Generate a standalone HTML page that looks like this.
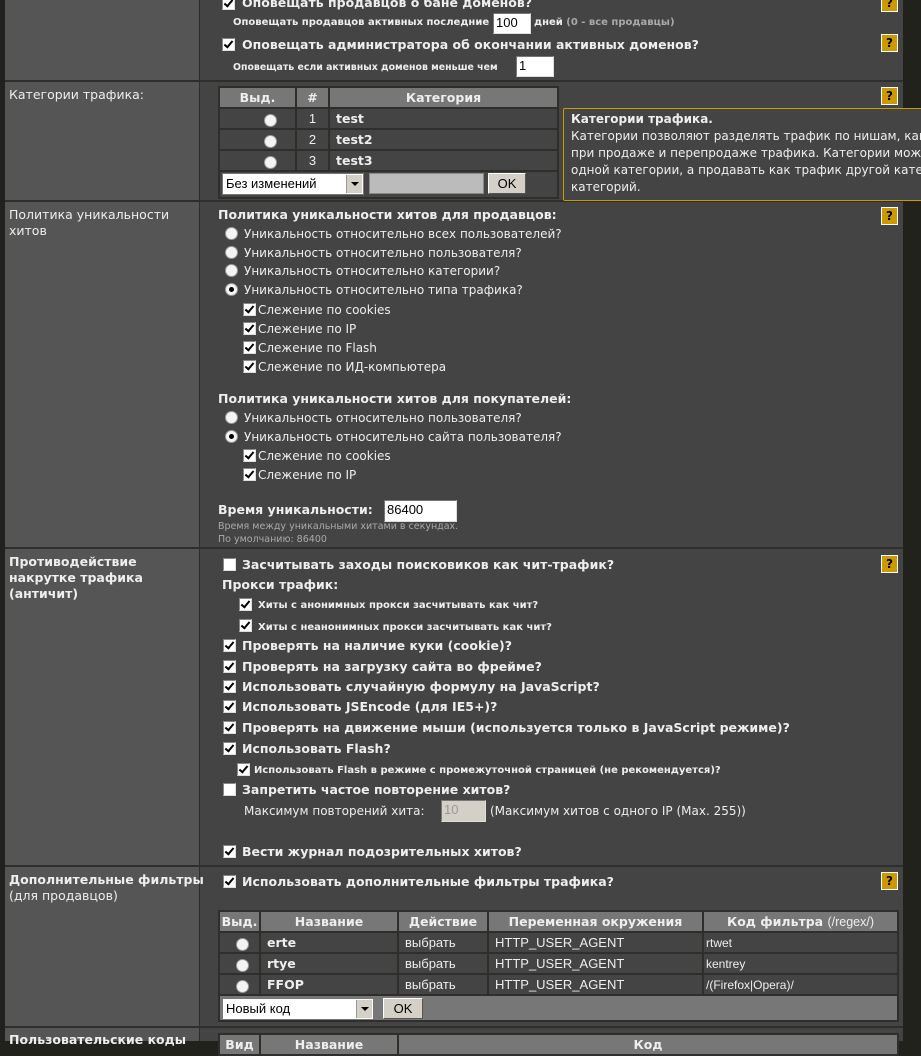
<!DOCTYPE html>
<html><head><meta charset="utf-8"><style>
body{margin:0;width:921px;height:1041px;overflow:hidden;background:#22221c;position:relative;font-family:"DejaVu Sans","Liberation Sans",sans-serif;color:#eee}
.a{position:absolute;white-space:nowrap;line-height:16px}
.b{font-weight:bold;font-size:12.5px}
.r{font-size:12px}
.s{font-weight:bold;font-size:10px}
.lc{position:absolute;left:5px;width:194px;background:#555}
.rc{position:absolute;left:200px;width:703px;background:#444}
.hl{position:absolute;left:5px;width:898px;height:2px;background:#2e2e2a}
.cb{position:absolute;width:11px;height:11px;background:#fff;border:1px solid #888;border-right-color:#ddd;border-bottom-color:#ddd}
.cb.c::after{content:"";position:absolute;left:3px;top:0px;width:3px;height:7px;border:solid #000;border-width:0 2px 2px 0;transform:rotate(40deg)}
.rd{position:absolute;width:11px;height:11px;border-radius:50%;background:#f4f4f4;border:1px solid #999}
.rd.c::after{content:"";position:absolute;left:3px;top:3px;width:5px;height:5px;border-radius:50%;background:#000}
.h{position:absolute;left:881px;width:15px;height:16px;background:#c90;border:1px solid #fff;color:#000;font:bold 12px "DejaVu Sans",sans-serif;text-align:center;line-height:16px}
.in{position:absolute;background:#fff;border:1px solid #777;border-right-color:#ddd;border-bottom-color:#ddd;color:#000;font:13px "Liberation Sans",sans-serif;line-height:18px;padding-left:2px;box-sizing:border-box}
.btn{position:absolute;background:#d4d0c8;border:1px solid #fff;border-right-color:#555;border-bottom-color:#555;color:#000;font:13px "Liberation Sans",sans-serif;text-align:center;box-sizing:border-box}
.sel{position:absolute;background:#fff;border:1px solid #777;color:#000;font:13px "Liberation Sans",sans-serif;box-sizing:border-box;padding-left:3px}
.sel i{position:absolute;right:1px;top:1px;bottom:1px;width:15px;background:#d4d0c8;border-left:1px solid #999}
.sel i::after{content:"";position:absolute;left:4px;top:7px;border:4px solid transparent;border-top:4px solid #000}
table{position:absolute;border-collapse:collapse;background:#444}
td{border:2px solid #2e2e2a;height:19px;padding:0 6px;font-size:12.5px;white-space:nowrap;box-sizing:border-box}
th{border:2px solid #2e2e2a;background:#777;height:19px;font-size:12.5px;font-weight:bold;white-space:nowrap;padding:0}
tr{height:21px}
.n{font:13px "Liberation Sans",sans-serif}
</style></head><body>
<div class="lc" style="top:0;height:1041px"></div>
<div class="rc" style="top:0;height:1041px"></div>
<div style="position:absolute;left:199px;top:0;width:1px;height:1041px;background:#2e2e2a"></div>
<div class="hl" style="top:80px"></div>
<div class="hl" style="top:200px"></div>
<div class="hl" style="top:547px"></div>
<div class="hl" style="top:865px"></div>
<div class="hl" style="top:1026px"></div>

<div class="cb c" style="left:222px;top:-3px"></div>
<div class="a b" style="left:242px;top:-5px">Оповещать продавцов о бане доменов?</div>
<div class="h" style="top:-6px">?</div>
<div class="a s" style="left:233px;top:15px">Оповещать продавцов активных последние</div>
<div class="in" style="left:493px;top:13px;width:38px;height:21px">100</div>
<div class="a s" style="left:534px;top:15px">дней <span style="color:#aaa">(0 - все продавцы)</span></div>
<div class="cb c" style="left:222px;top:38px"></div>
<div class="a b" style="left:242px;top:37px">Оповещать администратора об окончании активных доменов?</div>
<div class="h" style="top:34px">?</div>
<div class="a s" style="left:233px;top:60px;font-size:9.4px">Оповещать если активных доменов меньше чем</div>
<div class="in" style="left:516px;top:56px;width:38px;height:21px">1</div>

<div class="a" style="left:9px;top:87px;font-size:12.5px">Категории трафика:</div>
<div class="h" style="top:87px">?</div>
<table style="left:218px;top:86px;width:341px">
<tr><th style="width:75px">Выд.</th><th style="width:31px">#</th><th>Категория</th></tr>
<tr><td style="position:relative"><span class="rd" style="left:44px;top:5px"></span></td><td class="n" style="text-align:center">1</td><td><b>test</b></td></tr>
<tr><td style="position:relative"><span class="rd" style="left:44px;top:5px"></span></td><td class="n" style="text-align:center">2</td><td><b>test2</b></td></tr>
<tr><td style="position:relative"><span class="rd" style="left:44px;top:5px"></span></td><td class="n" style="text-align:center">3</td><td><b>test3</b></td></tr>
<tr style="height:27px"><td colspan="3" style="height:25px"></td></tr>
</table>
<div class="sel" style="left:222px;top:173px;width:142px;height:22px;line-height:20px">Без изменений<i></i></div>
<div style="position:absolute;left:369px;top:173px;width:115px;height:21px;background:#bbb;border:1px solid #888;box-sizing:border-box"></div>
<div class="btn" style="left:488px;top:173px;width:38px;height:21px;line-height:19px">OK</div>
<div style="position:absolute;left:563px;top:108px;width:370px;height:91px;background:#444;border:1px solid #c90;border-radius:2px"></div>
<div class="a" style="left:571px;top:111px;font-size:12px;line-height:17px">
<b>Категории трафика.</b><br>Категории позволяют разделять трафик по нишам, как<br>при продаже и перепродаже трафика. Категории можно<br>одной категории, а продавать как трафик другой катег<br>категорий.</div>

<div class="a" style="left:9px;top:207px;font-size:12.5px">Политика уникальности<br>хитов</div>
<div class="h" style="top:207px">?</div>
<div class="a b" style="left:218px;top:207px">Политика уникальности хитов для продавцов:</div>
<div class="rd" style="left:225px;top:227px"></div><div class="a r" style="left:244px;top:226px">Уникальность относительно всех пользователей?</div>
<div class="rd" style="left:225px;top:246px"></div><div class="a r" style="left:244px;top:245px">Уникальность относительно пользователя?</div>
<div class="rd" style="left:225px;top:264px"></div><div class="a r" style="left:244px;top:263px">Уникальность относительно категории?</div>
<div class="rd c" style="left:225px;top:283px"></div><div class="a r" style="left:244px;top:282px">Уникальность относительно типа трафика?</div>
<div class="cb c" style="left:243px;top:303px"></div><div class="a r" style="left:258px;top:302px">Слежение по cookies</div>
<div class="cb c" style="left:243px;top:322px"></div><div class="a r" style="left:258px;top:321px">Слежение по IP</div>
<div class="cb c" style="left:243px;top:341px"></div><div class="a r" style="left:258px;top:340px">Слежение по Flash</div>
<div class="cb c" style="left:243px;top:360px"></div><div class="a r" style="left:258px;top:359px">Слежение по ИД-компьютера</div>
<div class="a b" style="left:218px;top:391px">Политика уникальности хитов для покупателей:</div>
<div class="rd" style="left:225px;top:411px"></div><div class="a r" style="left:244px;top:410px">Уникальность относительно пользователя?</div>
<div class="rd c" style="left:225px;top:430px"></div><div class="a r" style="left:244px;top:429px">Уникальность относительно сайта пользователя?</div>
<div class="cb c" style="left:243px;top:449px"></div><div class="a r" style="left:258px;top:448px">Слежение по cookies</div>
<div class="cb c" style="left:243px;top:468px"></div><div class="a r" style="left:258px;top:467px">Слежение по IP</div>
<div class="a b" style="left:218px;top:502px">Время уникальности:</div>
<div class="in" style="left:384px;top:500px;width:73px;height:22px">86400</div>
<div class="a" style="left:218px;top:520px;font-size:9.5px;line-height:13px;color:#aaa">Время между уникальными хитами в секундах.<br>По умолчанию: 86400</div>

<div class="a" style="left:9px;top:554px;font-size:12.5px;font-weight:bold;line-height:16px">Противодействие<br>накрутке трафика<br>(античит)</div>
<div class="h" style="top:555px">?</div>
<div class="cb" style="left:223px;top:558px"></div><div class="a b" style="left:242px;top:557px">Засчитывать заходы поисковиков как чит-трафик?</div>
<div class="a b" style="left:222px;top:577px">Прокси трафик:</div>
<div class="cb c" style="left:239px;top:598px"></div><div class="a s" style="left:258px;top:598px">Хиты с анонимных прокси засчитывать как чит?</div>
<div class="cb c" style="left:239px;top:619px"></div><div class="a s" style="left:258px;top:620px">Хиты с неанонимных прокси засчитывать как чит?</div>
<div class="cb c" style="left:223px;top:639px"></div><div class="a b" style="left:242px;top:638px">Проверять на наличие куки (cookie)?</div>
<div class="cb c" style="left:223px;top:660px"></div><div class="a b" style="left:242px;top:659px">Проверять на загрузку сайта во фрейме?</div>
<div class="cb c" style="left:223px;top:680px"></div><div class="a b" style="left:242px;top:679px">Использовать случайную формулу на JavaScript?</div>
<div class="cb c" style="left:223px;top:700px"></div><div class="a b" style="left:242px;top:699px">Использовать JSEncode (для IE5+)?</div>
<div class="cb c" style="left:223px;top:721px"></div><div class="a b" style="left:242px;top:720px">Проверять на движение мыши (используется только в JavaScript режиме)?</div>
<div class="cb c" style="left:223px;top:742px"></div><div class="a b" style="left:242px;top:741px">Использовать Flash?</div>
<div class="cb c" style="left:237px;top:763px"></div><div class="a s" style="left:254px;top:763px">Использовать Flash в режиме с промежуточной страницей (не рекомендуется)?</div>
<div class="cb" style="left:223px;top:783px"></div><div class="a b" style="left:242px;top:782px">Запретить частое повторение хитов?</div>
<div class="a r" style="left:244px;top:803px">Максимум повторений хита:</div>
<div class="in" style="left:441px;top:800px;width:45px;height:22px;background:#d4d0c8;color:#999">10</div>
<div class="a r" style="left:490px;top:803px">(Максимум хитов с одного IP (Max. 255))</div>
<div class="cb c" style="left:223px;top:845px"></div><div class="a b" style="left:242px;top:844px">Вести журнал подозрительных хитов?</div>

<div class="a" style="left:9px;top:872px;font-size:12.5px"><b>Дополнительные фильтры</b><br>(для продавцов)</div>
<div class="h" style="top:872px">?</div>
<div class="cb c" style="left:223px;top:875px"></div><div class="a b" style="left:242px;top:874px">Использовать дополнительные фильтры трафика?</div>
<table style="left:218px;top:910px;width:681px">
<tr><th style="width:39px">Выд.</th><th style="width:136px">Название</th><th style="width:88px">Действие</th><th style="width:213px">Переменная окружения</th><th>Код фильтра <span style="font-weight:normal;font-family:'Liberation Sans'">(/regex/)</span></th></tr>
<tr><td style="position:relative"><span class="rd" style="left:16px;top:5px"></span></td><td><b>erte</b></td><td class="n">выбрать</td><td class="n">HTTP_USER_AGENT</td><td class="n" style="font-size:12px;padding-left:2px">rtwet</td></tr>
<tr><td style="position:relative"><span class="rd" style="left:16px;top:5px"></span></td><td><b>rtye</b></td><td class="n">выбрать</td><td class="n">HTTP_USER_AGENT</td><td class="n" style="font-size:12px;padding-left:2px">kentrey</td></tr>
<tr><td style="position:relative"><span class="rd" style="left:16px;top:5px"></span></td><td><b>FFOP</b></td><td class="n">выбрать</td><td class="n">HTTP_USER_AGENT</td><td class="n" style="font-size:12px;padding-left:2px">/(Firefox|Opera)/</td></tr>
<tr style="height:26px"><td colspan="5" style="height:24px;background:#777"></td></tr>
</table>
<div class="sel" style="left:222px;top:998px;width:152px;height:22px;line-height:20px">Новый код<i></i></div>
<div class="btn" style="left:383px;top:998px;width:40px;height:21px;line-height:19px">OK</div>

<div class="a" style="left:9px;top:1032px;font-size:12.5px;font-weight:bold">Пользовательские коды</div>
<div class="h" style="top:1033px">?</div>
<table style="left:218px;top:1033px;width:681px">
<tr><th style="width:39px">Вид</th><th style="width:136px">Название</th><th>Код</th></tr>
</table>
</body></html>
